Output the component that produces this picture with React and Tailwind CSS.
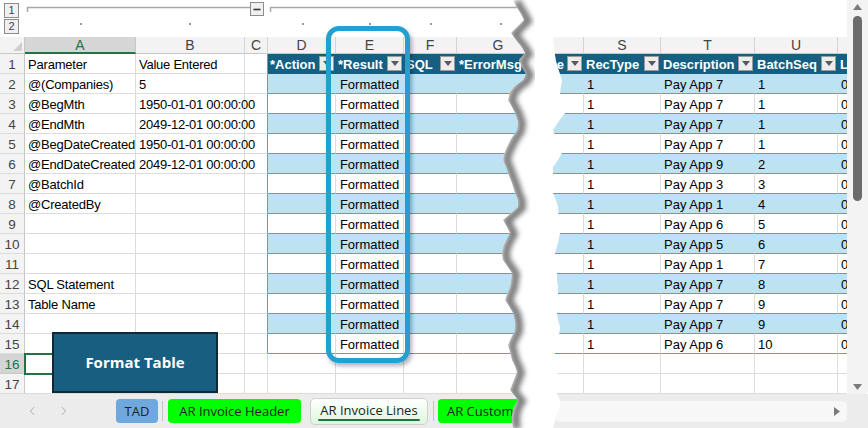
import React from 'react';
import { ChevronLeft, ChevronRight } from 'lucide-react';

const W = ['w-[111px]', 'w-[109px]', 'w-[23px]', 'w-[68px]', 'w-[68px]', 'w-[53px]', 'w-[83px]', 'w-[44px]', 'w-[77px]', 'w-[94px]', 'w-[83px]', 'w-[20px]'];
const LET = ['A', 'B', 'C', 'D', 'E', 'F', 'G', '', 'S', 'T', 'U', ''];

const left = [
  ['Parameter', 'Value Entered'],
  ['@(Companies)', '5'],
  ['@BegMth', '1950-01-01 00:00:00'],
  ['@EndMth', '2049-12-01 00:00:00'],
  ['@BegDateCreated', '1950-01-01 00:00:00'],
  ['@EndDateCreated', '2049-12-01 00:00:00'],
  ['@BatchId', ''],
  ['@CreatedBy', ''],
  ['', ''],
  ['', ''],
  ['', ''],
  ['SQL Statement', ''],
  ['Table Name', ''],
  ['', ''],
  ['', ''],
  ['', ''],
  ['', ''],
];
const pay = [7, 7, 7, 7, 9, 3, 1, 6, 5, 1, 7, 7, 7, 6];
const seq = [1, 1, 1, 1, 2, 3, 4, 5, 6, 7, 8, 9, 9, 10];

const header = {
  3: ['*Action', true],
  4: ['*Result', true],
  5: ['SQL', true],
  6: ['*ErrorMsg', false],
  7: ['e', true],
  8: ['RecType', true],
  9: ['Description', true],
  10: ['BatchSeq', true],
  11: ['L', false],
};

function Drop() {
  return (
    <span className="ml-auto mr-[2px] mb-[1px] flex h-[15px] w-[15px] shrink-0 items-center justify-center self-end border border-[#9a9a9a] bg-[#ededed]">
      <svg width="8" height="5" viewBox="0 0 8 5">
        <path d="M0 0h8L4 5z" fill="#5a5a5a" />
      </svg>
    </span>
  );
}

function Cell({ r, i }) {
  const band = r >= 2 && r <= 15;
  const blue = band && r % 2 === 0;
  const base = `${W[i]} shrink-0 h-full flex items-end pb-[1px] whitespace-nowrap`;

  if (i <= 2) {
    let cls = 'border-r border-b border-[#dcdcdc]';
    if (i === 2 && r <= 15) cls = 'border-r border-b border-r-[#4ba3d8] border-b-[#dcdcdc]';
    const sel = r === 16 && i === 0 ? 'outline-2 outline-[#217346] -outline-offset-1 relative' : '';
    const txt = i === 2 ? '' : left[r - 1][i];
    const track = i === 0 ? 'overflow-hidden tracking-[-0.2px]' : i === 1 ? 'tracking-[-0.25px]' : '';
    return (
      <div className={`${base} ${cls} ${sel} ${track} pl-[3px]`}>
        {txt}
      </div>
    );
  }

  if (r === 1) {
    const [t, d] = header[i];
    if (i === 7) {
      return (
        <div className={`${base} overflow-hidden bg-[#155f82] text-white font-bold justify-end border-b border-[#155f82]`}>
          <span className="mr-[3px]">{t}</span>
          <span className="mr-[2px] mb-[1px] flex h-[15px] w-[15px] shrink-0 items-center justify-center self-end border border-[#9a9a9a] bg-[#ededed]">
            <svg width="8" height="5" viewBox="0 0 8 5">
              <path d="M0 0h8L4 5z" fill="#5a5a5a" />
            </svg>
          </span>
        </div>
      );
    }
    return (
      <div className={`${base} overflow-hidden bg-[#155f82] text-white font-bold pl-[2px] border-b border-[#155f82]`}>
        <span>{t}</span>
        {d && <Drop />}
      </div>
    );
  }

  if (band) {
    const k = r - 2;
    let txt = '';
    if (i === 4) txt = 'Formatted';
    if (i === 8) txt = '1';
    if (i === 9) txt = `Pay App ${pay[k]}`;
    if (i === 10) txt = String(seq[k]);
    if (i === 11) txt = '0';
    const cls = blue
      ? 'bg-[#bde3f3] border-r border-b border-r-transparent border-b-[#4ba3d8]'
      : 'bg-white border-r border-b border-r-[#dcdcdc] border-b-[#4ba3d8]';
    return (
      <div className={`${base} overflow-hidden ${cls} ${i === 4 ? 'justify-center' : 'pl-[3px]'}`}>
        {txt}
      </div>
    );
  }

  return <div className={`${base} border-r border-b border-[#dcdcdc]`} />;
}

function Row({ r }) {
  const sel = r === 16;
  const cells = [];
  for (let i = 0; i < 12; i++) cells.push(<Cell key={i} r={r} i={i} />);
  return (
    <div className="flex h-[20px]">
      <div
        className={`w-[25px] shrink-0 h-full flex items-end pb-[1px] justify-center border-r border-b text-[13.5px] ${
          sel
            ? 'bg-[#d4d4d4] text-[#217346] border-r-[#c6c6c6] border-b-[#c8c8c8]'
            : 'bg-[#f3f3f3] text-[#444] border-r-[#c6c6c6] border-b-[#dcdcdc]'
        }`}
      >
        {r}
      </div>
      {cells}
    </div>
  );
}

function ColHeader() {
  return (
    <div className="flex h-[17px]">
      <div className="relative w-[25px] shrink-0 h-full bg-[#f3f3f3] border-r border-b border-r-[#c6c6c6] border-b-[#c8c8c8]">
        <svg className="absolute right-[2px] bottom-[2px]" width="9" height="9" viewBox="0 0 9 9">
          <path d="M9 0V9H0z" fill="#cfcfcf" />
        </svg>
      </div>
      {LET.map((l, i) => (
        <div
          key={i}
          className={`${W[i]} shrink-0 h-full flex items-center justify-center text-[14px] leading-none border-r ${
            i === 0
              ? 'bg-[#d6d6d6] text-[#217346] border-b-2 border-b-[#217346] border-r-[#c6c6c6]'
              : 'bg-[#f3f3f3] text-[#444] border-b border-b-[#c8c8c8] border-r-[#d4d4d4]'
          }`}
        >
          {l}
        </div>
      ))}
    </div>
  );
}

function OutlineBar() {
  return (
    <div className="flex h-[37px] bg-white">
      <div className="flex flex-col gap-[1px] pl-[4px] pt-[3px]">
        <div className="flex h-[15px] w-[15px] items-center justify-center border border-[#8c8c8c] bg-[#f0f0f0] text-[11px] text-[#444]">1</div>
        <div className="flex h-[15px] w-[15px] items-center justify-center border border-[#8c8c8c] bg-[#f0f0f0] text-[11px] text-[#444]">2</div>
      </div>
      <svg width="828" height="37" viewBox="19 0 828 37">
        <g stroke="#a8a8a8" strokeWidth="1.5" fill="none">
          <path d="M27.5 12V7.5H250" />
          <path d="M270.5 12V7.5H530" />
        </g>
        <rect x="250.5" y="2.5" width="13" height="13" fill="#f0f0f0" stroke="#8c8c8c" />
        <path d="M253.5 9.5h7" stroke="#333" strokeWidth="1.6" />
        <g fill="#9a9a9a">
          <rect x="80" y="23" width="2" height="2" />
          <rect x="189" y="23" width="2" height="2" />
          <rect x="302" y="23" width="2" height="2" />
          <rect x="369" y="23" width="2" height="2" />
          <rect x="430" y="23" width="2" height="2" />
          <rect x="500" y="23" width="2" height="2" />
        </g>
      </svg>
    </div>
  );
}

function VScroll() {
  return (
    <div className="flex w-[21px] shrink-0 flex-col items-center bg-[#f3f3f3] rounded-b-[4px]">
      <svg className="mt-[4px]" width="9" height="6" viewBox="0 0 9 6">
        <path d="M4.5 0L9 6H0z" fill="#7a7a7a" />
      </svg>
      <div className="mt-[6px] h-[185px] w-[9px] rounded-full bg-[#6b6b6b]" />
      <div className="flex-1" />
      <svg className="mb-[4px]" width="9" height="6" viewBox="0 0 9 6">
        <path d="M0 0H9L4.5 6z" fill="#7a7a7a" />
      </svg>
    </div>
  );
}

function TabBar() {
  return (
    <div className="flex h-[34px] items-center bg-[#ececec] font-['Open_Sans',sans-serif] text-[13px] leading-[18px] text-[#222]">
      <div className="flex w-[555px] shrink-0 items-center overflow-hidden">
        <ChevronLeft className="ml-[25px] shrink-0" size={14} color="#a0a0a0" strokeWidth={1.5} />
        <ChevronRight className="ml-[18px] shrink-0" size={14} color="#a0a0a0" strokeWidth={1.5} />
        <div className="ml-[45px] flex h-[24px] w-[42px] shrink-0 items-center justify-center rounded-[4px] bg-[#6fa8dc]">TAD</div>
        <div className="ml-[4px] h-[20px] w-px shrink-0 bg-[#c4c4c4]" />
        <div className="ml-[5px] flex h-[24px] w-[133px] shrink-0 items-center justify-center rounded-[4px] bg-[#00ff00]">AR Invoice Header</div>
        <div className="ml-[9px] flex h-[27px] w-[118px] shrink-0 flex-col items-center justify-center rounded-[5px] border border-[#cfcfcf] bg-gradient-to-b from-white to-[#dcf7dc] pt-[1px]">
          <span className="leading-[16px]">AR Invoice Lines</span>
          <span className="mt-[1px] h-[2px] w-[102px] rounded-full bg-[#217346]" />
        </div>
        <div className="ml-[5px] h-[20px] w-px shrink-0 bg-[#c4c4c4]" />
        <div className="ml-[4px] flex h-[24px] w-[110px] shrink-0 items-center rounded-[4px] bg-[#00ff00] pl-[9px]">AR Customers</div>
      </div>
      <div className="flex h-[21px] w-[292px] shrink-0 items-center justify-end rounded-[5px] bg-[#f7f7f7] pr-[7px]">
        <svg width="6" height="9" viewBox="0 0 6 9">
          <path d="M0 0L6 4.5L0 9z" fill="#7a7a7a" />
        </svg>
      </div>
    </div>
  );
}

const L = [
  [513, 0], [516, 6], [521, 14], [524, 20], [517, 27], [511, 33], [516, 40], [521, 46], [525, 53], [519, 60], [522, 67], [526, 74], [523, 80], [515, 86], [510, 92], [508, 100], [512, 107], [515, 113], [518, 122], [517, 130], [511, 139], [507, 147], [504, 154], [503, 160], [506, 167], [508, 173], [512, 183], [515, 193], [518, 200], [518, 207], [510, 214], [503, 220], [507, 227], [510, 233], [506, 240], [503, 247], [502, 254], [503, 260], [508, 267], [512, 273], [511, 280], [510, 287], [507, 294], [505, 300], [509, 306], [513, 313], [515, 322], [515, 330], [511, 338], [508, 345], [510, 352], [512, 360], [515, 366], [517, 372], [515, 377], [513, 382], [510, 390], [514, 395], [518, 400], [515, 405], [513, 410], [512, 416], [512, 422], [513, 428],
];
const R = [
  [553, 428], [555, 421], [557, 414], [560, 407], [560, 400], [557, 394], [556, 388], [558, 381], [558, 375], [555, 367], [553, 360], [555, 352], [557, 345], [559, 336], [560, 327], [558, 320], [557, 313], [558, 300], [558, 287], [557, 280], [557, 273], [556, 263], [555, 253], [558, 243], [560, 233], [559, 220], [558, 207], [556, 200], [553, 193], [553, 180], [553, 167], [558, 160], [562, 153], [557, 141], [553, 130], [559, 121], [565, 113], [562, 103], [560, 93], [561, 86], [562, 80], [560, 74], [558, 68], [556, 61], [555, 55], [554, 47], [553, 40], [556, 30], [560, 20], [558, 10], [555, 0],
];

function Tear() {
  const gap = [...L, ...R].map((p) => p.join(',')).join(' ');
  const shadow = 'M' + L.map((p) => `${p[0] + 4},${p[1] + 1}`).join(' L');
  return (
    <svg className="pointer-events-none absolute left-0 top-0" width="868" height="428" viewBox="0 0 868 428">
      <defs>
        <clipPath id="gapclip">
          <polygon points={gap} />
        </clipPath>
        <filter id="blur" x="-20%" y="-5%" width="140%" height="110%">
          <feGaussianBlur stdDeviation="2.4" />
        </filter>
      </defs>
      <polygon points={gap} fill="#ffffff" />
      <g clipPath="url(#gapclip)">
        <path d={shadow} stroke="#666" strokeWidth="8" fill="none" opacity="0.85" filter="url(#blur)" />
      </g>
    </svg>
  );
}

export default function App() {
  const rows = [];
  for (let r = 1; r <= 17; r++) rows.push(<Row key={r} r={r} />);
  return (
    <div className="relative h-[428px] w-[868px] overflow-hidden bg-white text-[13px] leading-[15px] text-black font-['Liberation_Sans',Arial,sans-serif]">
      <div className="flex h-[394px]">
        <div className="w-[847px] shrink-0 overflow-hidden">
          <OutlineBar />
          <ColHeader />
          {rows}
        </div>
        <VScroll />
      </div>
      <TabBar />

      <div className="absolute left-[52px] top-[332px] flex h-[61px] w-[166px] items-center justify-center border-2 border-[#0e2a3a] bg-[#185e80] font-['Open_Sans',sans-serif] text-[15px] font-bold text-white">
        Format Table
      </div>

      <div className="pointer-events-none absolute left-[326px] top-[26px] h-[337px] w-[84px] rounded-[13px] border-[5px] border-[#23a0d0] shadow-[2px_3px_4px_rgba(0,0,0,0.3)]" />

      <Tear />
    </div>
  );
}
